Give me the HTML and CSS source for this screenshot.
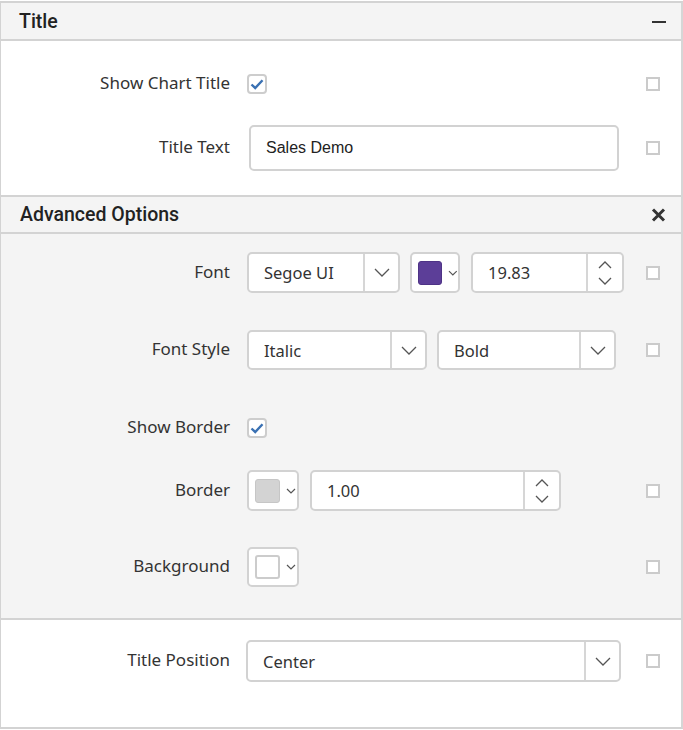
FILE: index.html
```html
<!DOCTYPE html>
<html>
<head>
<meta charset="utf-8">
<link rel="stylesheet" href="styles.css">
</head>
<body>
<div class="panel">
  <div class="hdr hdr-first">
    <span class="hdr-title">Title</span>
    <svg class="hdr-icon" width="14" height="14" viewBox="0 0 14 14"><path d="M0 8 H14" stroke="#333" stroke-width="2"/></svg>
  </div>
  <div class="sec sec-title">
    <div class="row h20">
      <span class="lbl">Show Chart Title</span>
      <div class="ctrl"><span class="chk"><svg width="16" height="16" viewBox="0 0 16 16"><path d="M2.5 8.5 L6.2 12 L13.5 4.2" fill="none" stroke="#3a71b3" stroke-width="2.4"/></svg></span></div>
      <span class="mini"></span>
    </div>
    <div class="row h46 mt31">
      <span class="lbl">Title Text</span>
      <div class="ctrl"><div class="box text-input"><span class="arial">Sales Demo</span></div></div>
      <span class="mini"></span>
    </div>
  </div>

  <div class="hdr hdr-adv">
    <span class="hdr-title">Advanced Options</span>
    <svg class="hdr-icon" width="15" height="14" viewBox="0 0 15 14"><path d="M2 1.5 L13 12.5 M13 1.5 L2 12.5" stroke="#333" stroke-width="3"/></svg>
  </div>
  <div class="sec sec-adv">
    <div class="row h41">
      <span class="lbl">Font</span>
      <div class="ctrl">
        <div class="box select w153"><span class="val">Segoe UI</span><span class="dd"><svg width="16" height="9" viewBox="0 0 16 9"><path d="M1 1 L8 8 L15 1" fill="none" stroke="#555" stroke-width="1.3"/></svg></span></div>
        <div class="box color w50 g11"><span class="sw sw-purple"></span><svg class="cchev" width="10" height="6" viewBox="0 0 10 6"><path d="M1 1 L5 5 L9 1" fill="none" stroke="#555" stroke-width="1.2"/></svg></div>
        <div class="box num w153"><span class="val">19.83</span><span class="spin"><svg width="14" height="24" viewBox="0 0 14 24"><path d="M1 7 L7 1 L13 7 M1 17 L7 23 L13 17" fill="none" stroke="#555" stroke-width="1.3"/></svg></span></div>
      </div>
      <span class="mini"></span>
    </div>
    <div class="row h40 mt37">
      <span class="lbl">Font Style</span>
      <div class="ctrl">
        <div class="box select w180"><span class="val">Italic</span><span class="dd"><svg width="16" height="9" viewBox="0 0 16 9"><path d="M1 1 L8 8 L15 1" fill="none" stroke="#555" stroke-width="1.3"/></svg></span></div>
        <div class="box select w179"><span class="val">Bold</span><span class="dd"><svg width="16" height="9" viewBox="0 0 16 9"><path d="M1 1 L8 8 L15 1" fill="none" stroke="#555" stroke-width="1.3"/></svg></span></div>
      </div>
      <span class="mini"></span>
    </div>
    <div class="row h20 mt48">
      <span class="lbl">Show Border</span>
      <div class="ctrl"><span class="chk"><svg width="16" height="16" viewBox="0 0 16 16"><path d="M2.5 8.5 L6.2 12 L13.5 4.2" fill="none" stroke="#3a71b3" stroke-width="2.4"/></svg></span></div>
      <span class="nomini"></span>
    </div>
    <div class="row h41 mt32">
      <span class="lbl">Border</span>
      <div class="ctrl">
        <div class="box color w52 g11"><span class="sw sw-gray"></span><svg class="cchev" width="10" height="6" viewBox="0 0 10 6"><path d="M1 1 L5 5 L9 1" fill="none" stroke="#555" stroke-width="1.2"/></svg></div>
        <div class="box num w251"><span class="val">1.00</span><span class="spin"><svg width="14" height="24" viewBox="0 0 14 24"><path d="M1 7 L7 1 L13 7 M1 17 L7 23 L13 17" fill="none" stroke="#555" stroke-width="1.3"/></svg></span></div>
      </div>
      <span class="mini"></span>
    </div>
    <div class="row h40 mt36">
      <span class="lbl">Background</span>
      <div class="ctrl">
        <div class="box color w52"><span class="sw sw-white"></span><svg class="cchev" width="10" height="6" viewBox="0 0 10 6"><path d="M1 1 L5 5 L9 1" fill="none" stroke="#555" stroke-width="1.2"/></svg></div>
      </div>
      <span class="mini"></span>
    </div>
  </div>

  <div class="sec sec-pos">
    <div class="row h42">
      <span class="lbl">Title Position</span>
      <div class="ctrl ml-1">
        <div class="box select w375"><span class="val">Center</span><span class="dd"><svg width="16" height="9" viewBox="0 0 16 9"><path d="M1 1 L8 8 L15 1" fill="none" stroke="#555" stroke-width="1.3"/></svg></span></div>
      </div>
      <span class="mini"></span>
    </div>
  </div>
</div>
</body>
</html>
```

FILE: styles.css
```css
* { box-sizing: border-box; }
html, body { margin: 0; padding: 0; background: #fff; }
body { font-family: "Noto Sans", "Open Sans", sans-serif; color: #333; }

.panel {
  width: 683px;
  margin-top: 1px;
  border-top: 2px solid #d3d3d3;
  border-left: 1px solid #d3d3d3;
  border-right: 2px solid #d6d6d6;
  border-bottom: 2px solid #d3d3d3;
}

.hdr {
  display: flex;
  align-items: center;
  justify-content: space-between;
  background: #f4f4f4;
  border-bottom: 2px solid #d3d3d3;
  padding: 0 15px 0 18px;
  font-family: Roboto, "Liberation Sans", sans-serif;
  font-weight: 500;
  font-size: 19.5px;
  color: #222;
}
.hdr-first { height: 38px; }
.hdr-adv {
  height: 39px;
  border-top: 2px solid #d3d3d3;
  padding-left: 19px;
}
.hdr-icon { display: block; }

.sec-title { padding: 33px 0 24px; }
.sec-adv { background: #f4f4f4; padding: 18px 0 31px; border-bottom: 2px solid #d3d3d3; }
.sec-pos { padding: 20px 0 45px; }

.row {
  display: grid;
  grid-template-columns: 229px 1fr 14px;
  grid-template-rows: 100%;
  column-gap: 17px;
  align-items: center;
  padding-right: 21px;
}
.h20 { height: 20px; }
.h40 { height: 40px; }
.h41 { height: 41px; }
.h42 { height: 42px; }
.h46 { height: 46px; }
.mt31 { margin-top: 31px; }
.mt32 { margin-top: 32px; }
.mt36 { margin-top: 36px; }
.mt37 { margin-top: 37px; }
.mt48 { margin-top: 48px; }

.lbl {
  text-align: right;
  font-size: 17px;
  line-height: 20px;
  color: #333;
  white-space: nowrap;
  position: relative;
  top: -1px;
}

.ctrl {
  display: flex;
  align-items: center;
  gap: 10px;
  height: 100%;
}
.ml-1 { margin-left: -1px; }

.mini {
  width: 14px;
  height: 14px;
  border: 2px solid #cbcbcb;
  background: #fff;
}

.chk {
  width: 20px;
  height: 20px;
  border: 2px solid #cdcdcd;
  border-radius: 4px;
  background: #fff;
  display: flex;
  align-items: center;
  justify-content: center;
}

.box {
  height: 100%;
  border: 2px solid #d2d2d2;
  border-radius: 5px;
  background: #fff;
  display: flex;
  align-items: center;
  flex: none;
}
.g11 { margin-right: 1px; }
.text-input { width: 370px; margin-left: 2px; padding-left: 15px; }
.arial { font-family: "Liberation Sans", Arial, sans-serif; font-size: 16px; color: #222; }

.w50 { width: 50px; }
.w52 { width: 52px; }
.w153 { width: 153px; }
.w179 { width: 179px; }
.w180 { width: 180px; }
.w251 { width: 251px; }
.w375 { width: 375px; }

.val {
  flex: 1;
  padding-left: 15px;
  font-size: 16.5px;
  color: #333;
}
.dd, .spin {
  width: 35px;
  height: 100%;
  border-left: 2px solid #d6d6d6;
  display: flex;
  align-items: center;
  justify-content: center;
}
.spin { width: 36px; }

.color { padding-left: 6px; }
.sw {
  width: 25px;
  height: 24px;
  border-radius: 3px;
}
.sw-purple { background: #5c3e98; border: 1px solid #4e3386; }
.sw-gray { background: #d3d3d3; border: 1px solid #c6c6c6; }
.sw-white { background: #fff; border: 2px solid #cccccc; }
.cchev { margin-left: 6px; }
```
